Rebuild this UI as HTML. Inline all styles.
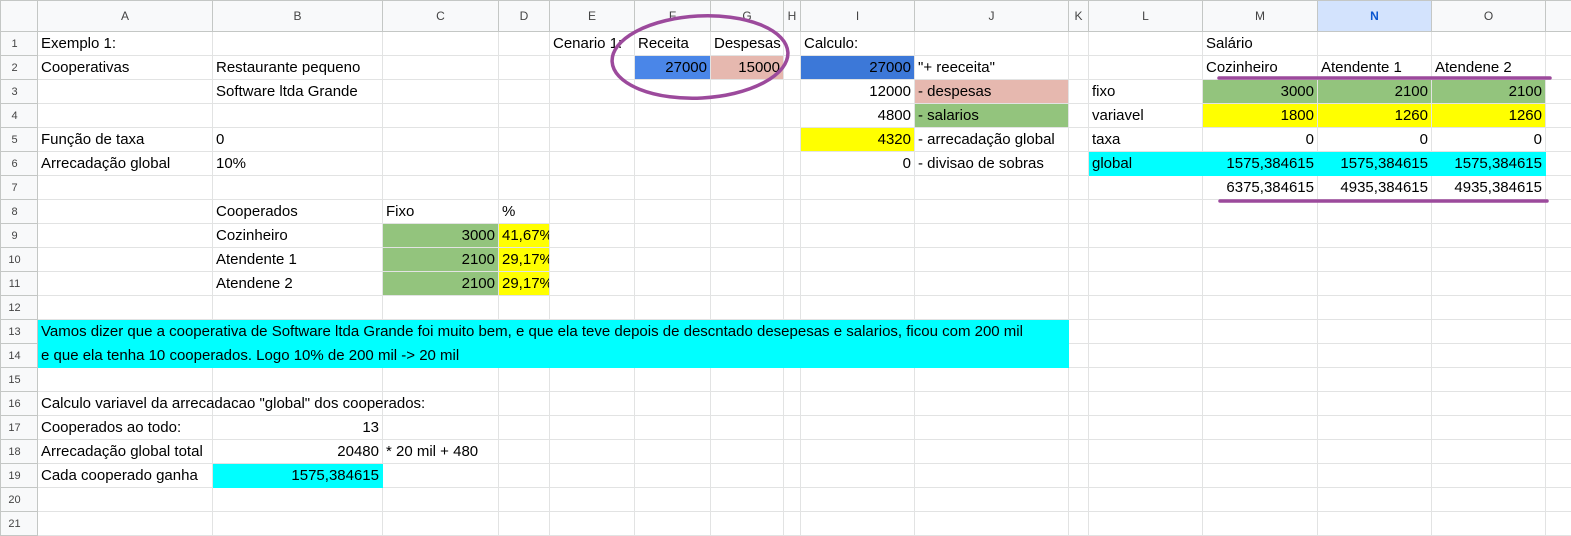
<!DOCTYPE html>
<html><head><meta charset="utf-8"><style>
body{margin:0;width:1571px;height:531px;overflow:hidden;background:#fff;font-family:"Liberation Sans",Arial,sans-serif;position:relative}
table{border-collapse:collapse;table-layout:fixed;position:absolute;left:0;top:0;width:1571px}
td{height:24px;padding:1px 3px 0 3px;border:1px solid #e2e3e3;font-size:15px;color:#000;white-space:nowrap;overflow:visible;line-height:22px;box-sizing:border-box}
tr.h td{height:31px;padding:0;background:#f8f9fa;color:#444;font-size:12px;text-align:center;border-color:#c4c7c5}
td.rn{background:#f8f9fa;color:#444;font-size:11px;text-align:center;padding:1px 9px 0 0;border-color:#c4c7c5}
.r{text-align:right}
.clip{overflow:hidden}
.b1{background:#4a86e8}.b2{background:#3c78d8}.pk{background:#e6b8af}.gr{background:#93c47d}.ye{background:#ffff00}.cy{background:#00ffff;border-color:#00ffff}
</style></head><body>
<table>
<colgroup><col style="width:37px"><col style="width:175px"><col style="width:170px"><col style="width:116px"><col style="width:51px"><col style="width:85px"><col style="width:76px"><col style="width:73px"><col style="width:17px"><col style="width:114px"><col style="width:154px"><col style="width:20px"><col style="width:114px"><col style="width:115px"><col style="width:114px"><col style="width:114px"><col style="width:26px"></colgroup>
<tr class="h"><td></td><td>A</td><td>B</td><td>C</td><td>D</td><td>E</td><td>F</td><td>G</td><td>H</td><td>I</td><td>J</td><td>K</td><td>L</td><td>M</td><td style="background:#d3e3fd;font-weight:bold;color:#0b57d0">N</td><td>O</td><td></td></tr>
<tr><td class="rn">1</td><td>Exemplo 1:</td><td></td><td></td><td></td><td class="clip">Cenario 1:</td><td>Receita</td><td class="clip">Despesas</td><td></td><td>Calculo:</td><td></td><td></td><td></td><td>Salário</td><td></td><td></td><td></td></tr>
<tr><td class="rn">2</td><td>Cooperativas</td><td>Restaurante pequeno</td><td></td><td></td><td></td><td class="b1 r">27000</td><td class="pk r">15000</td><td></td><td class="b2 r">27000</td><td>"+ reeceita"</td><td></td><td></td><td>Cozinheiro</td><td>Atendente 1</td><td>Atendene 2</td><td></td></tr>
<tr><td class="rn">3</td><td></td><td>Software ltda Grande</td><td></td><td></td><td></td><td></td><td></td><td></td><td class="r">12000</td><td class="pk">- despesas</td><td></td><td>fixo</td><td class="gr r">3000</td><td class="gr r">2100</td><td class="gr r">2100</td><td></td></tr>
<tr><td class="rn">4</td><td></td><td></td><td></td><td></td><td></td><td></td><td></td><td></td><td class="r">4800</td><td class="gr">- salarios</td><td></td><td>variavel</td><td class="ye r">1800</td><td class="ye r">1260</td><td class="ye r">1260</td><td></td></tr>
<tr><td class="rn">5</td><td>Função de taxa</td><td>0</td><td></td><td></td><td></td><td></td><td></td><td></td><td class="ye r">4320</td><td>- arrecadação global</td><td></td><td>taxa</td><td class="r">0</td><td class="r">0</td><td class="r">0</td><td></td></tr>
<tr><td class="rn">6</td><td>Arrecadação global</td><td>10%</td><td></td><td></td><td></td><td></td><td></td><td></td><td class="r">0</td><td>- divisao de sobras</td><td></td><td class="cy">global</td><td class="cy r">1575,384615</td><td class="cy r">1575,384615</td><td class="cy r">1575,384615</td><td></td></tr>
<tr><td class="rn">7</td><td></td><td></td><td></td><td></td><td></td><td></td><td></td><td></td><td></td><td></td><td></td><td></td><td class="r">6375,384615</td><td class="r">4935,384615</td><td class="r">4935,384615</td><td></td></tr>
<tr><td class="rn">8</td><td></td><td>Cooperados</td><td>Fixo</td><td>%</td><td></td><td></td><td></td><td></td><td></td><td></td><td></td><td></td><td></td><td></td><td></td><td></td></tr>
<tr><td class="rn">9</td><td></td><td>Cozinheiro</td><td class="gr r">3000</td><td class="ye clip">41,67%</td><td></td><td></td><td></td><td></td><td></td><td></td><td></td><td></td><td></td><td></td><td></td><td></td></tr>
<tr><td class="rn">10</td><td></td><td>Atendente 1</td><td class="gr r">2100</td><td class="ye clip">29,17%</td><td></td><td></td><td></td><td></td><td></td><td></td><td></td><td></td><td></td><td></td><td></td><td></td></tr>
<tr><td class="rn">11</td><td></td><td>Atendene 2</td><td class="gr r">2100</td><td class="ye clip">29,17%</td><td></td><td></td><td></td><td></td><td></td><td></td><td></td><td></td><td></td><td></td><td></td><td></td></tr>
<tr><td class="rn">12</td><td></td><td></td><td></td><td></td><td></td><td></td><td></td><td></td><td></td><td></td><td></td><td></td><td></td><td></td><td></td><td></td></tr>
<tr><td class="rn">13</td><td class="cy">Vamos dizer que a cooperativa de Software ltda Grande foi muito bem, e que ela teve depois de descntado desepesas e salarios, ficou com 200 mil</td><td class="cy"></td><td class="cy"></td><td class="cy"></td><td class="cy"></td><td class="cy"></td><td class="cy"></td><td class="cy"></td><td class="cy"></td><td class="cy"></td><td></td><td></td><td></td><td></td><td></td><td></td></tr>
<tr><td class="rn">14</td><td class="cy">e que ela tenha 10 cooperados. Logo 10% de 200 mil -&gt; 20 mil</td><td class="cy"></td><td class="cy"></td><td class="cy"></td><td class="cy"></td><td class="cy"></td><td class="cy"></td><td class="cy"></td><td class="cy"></td><td class="cy"></td><td></td><td></td><td></td><td></td><td></td><td></td></tr>
<tr><td class="rn">15</td><td></td><td></td><td></td><td></td><td></td><td></td><td></td><td></td><td></td><td></td><td></td><td></td><td></td><td></td><td></td><td></td></tr>
<tr><td class="rn">16</td><td>Calculo variavel da arrecadacao "global" dos cooperados:</td><td></td><td></td><td></td><td></td><td></td><td></td><td></td><td></td><td></td><td></td><td></td><td></td><td></td><td></td><td></td></tr>
<tr><td class="rn">17</td><td>Cooperados ao todo:</td><td class="r">13</td><td></td><td></td><td></td><td></td><td></td><td></td><td></td><td></td><td></td><td></td><td></td><td></td><td></td><td></td></tr>
<tr><td class="rn">18</td><td>Arrecadação global total</td><td class="r">20480</td><td>* 20 mil + 480</td><td></td><td></td><td></td><td></td><td></td><td></td><td></td><td></td><td></td><td></td><td></td><td></td><td></td></tr>
<tr><td class="rn">19</td><td>Cada cooperado ganha</td><td class="cy r">1575,384615</td><td></td><td></td><td></td><td></td><td></td><td></td><td></td><td></td><td></td><td></td><td></td><td></td><td></td><td></td></tr>
<tr><td class="rn">20</td><td></td><td></td><td></td><td></td><td></td><td></td><td></td><td></td><td></td><td></td><td></td><td></td><td></td><td></td><td></td><td></td></tr>
<tr><td class="rn">21</td><td></td><td></td><td></td><td></td><td></td><td></td><td></td><td></td><td></td><td></td><td></td><td></td><td></td><td></td><td></td><td></td></tr>
</table>
<svg width="1571" height="531" style="position:absolute;left:0;top:0" fill="none" stroke="#9c4a9c" stroke-width="3.5" stroke-linecap="round">
<ellipse cx="700" cy="57" rx="88" ry="41" transform="rotate(-3 700 57)"/>
<line x1="1219" y1="78" x2="1550" y2="78"/>
<line x1="1220" y1="201" x2="1547" y2="201"/>
</svg>
</body></html>
